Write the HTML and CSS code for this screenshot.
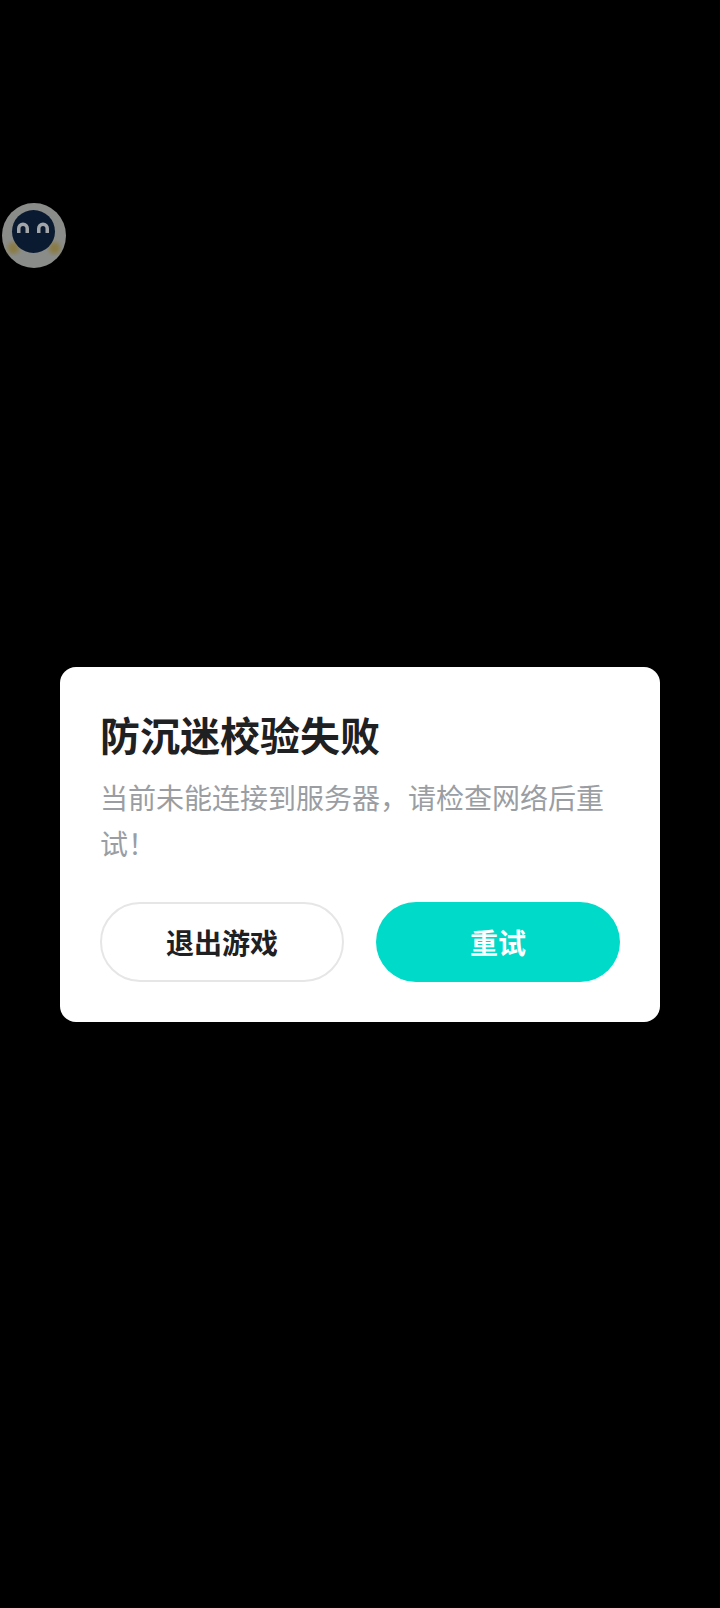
FILE: index.html
```html
<!DOCTYPE html>
<html lang="zh-CN">
<head>
    <meta charset="UTF-8">
    <meta name="viewport" content="width=device-width, initial-scale=1.0">
    <title>防沉迷校验失败</title>
    <link rel="stylesheet" href="styles.css">
</head>
<body>
  <svg class="float-ball" width="64" height="65" viewBox="0 0 64 65">
    <defs>
      <filter id="soft"><feGaussianBlur stdDeviation="2"/></filter>
    </defs>
    <ellipse cx="32" cy="32.500" rx="32" ry="32.500" fill="#8a8c8a"/>
    <ellipse cx="11.500" cy="45" rx="6" ry="6" fill="#8a7c45" filter="url(#soft)"/>
    <ellipse cx="52.500" cy="45" rx="6" ry="6" fill="#8a7c45" filter="url(#soft)"/>
    <circle cx="31.500" cy="28.500" r="21.500" fill="#0a1a30"/>
    <path d="M16.750 30 V25.500 A4.250 4.250 0 0 1 25.250 25.500 V30" fill="none" stroke="#a3a6a8" stroke-width="3.500"/>
    <path d="M36.750 30 V25.500 A4.250 4.250 0 0 1 45.250 25.500 V30" fill="none" stroke="#a3a6a8" stroke-width="3.500"/>
  </svg>

  <div class="dialog">
    <h2 class="dialog-title">防沉迷校验失败</h2>
    <p class="dialog-text">当前未能连接到服务器，请检查网络后重试！</p>
    <div class="dialog-buttons">
      <button type="button" class="btn btn-exit">退出游戏</button>
      <button type="button" class="btn btn-retry">重试</button>
    </div>
  </div>
</body>
</html>
```

FILE: styles.css
```css
html, body {
    margin: 0;
    height: 100%;
}

body {
    background: #000;
    font-family: "Noto Sans CJK SC", "Noto Sans", sans-serif;
    padding-top: 667px;
    box-sizing: border-box;
    overflow: hidden;
}

.float-ball {
    position: absolute;
    left: 2px;
    top: 203px;
}

.dialog {
    width: 520px;
    margin: 0 auto;
    padding: 40px;
    background: #fff;
    border-radius: 16px;
}

.dialog-title {
    margin: 0;
    font-size: 40px;
    line-height: 54px;
    font-weight: bold;
    color: #1f2022;
}

.dialog-text {
    margin: 13px 0 0;
    font-size: 28px;
    line-height: 46px;
    color: #9a9ea3;
}

.dialog-buttons {
    display: grid;
    grid-template-columns: 1fr 1fr;
    gap: 32px;
    margin-top: 36px;
}

.btn {
    height: 80px;
    border-radius: 40px;
    font-family: inherit;
    font-size: 28px;
    font-weight: bold;
    padding: 0;
    box-sizing: border-box;
}

.btn-exit {
    background: #fff;
    color: #1f2022;
    border: 2px solid #e6e6e6;
}

.btn-retry {
    background: #00dac8;
    color: #fff;
    border: none;
}
```
